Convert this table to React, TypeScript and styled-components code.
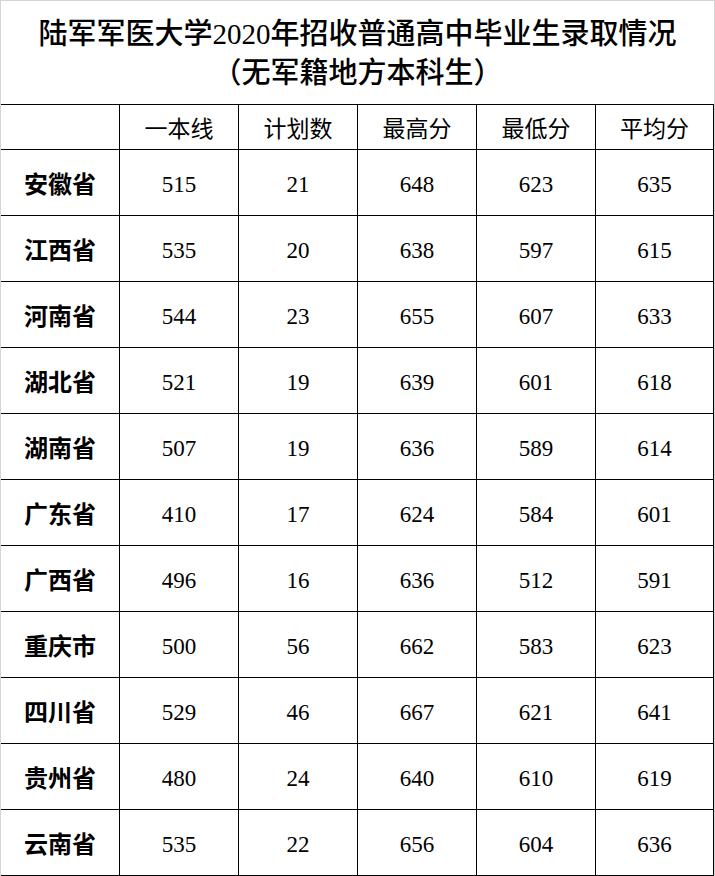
import React from 'react';
import styled, { createGlobalStyle } from 'styled-components';

const GlobalStyle = createGlobalStyle`
  html, body {
    margin: 0;
    padding: 0;
    background: #fff;
  }
`;

const Page = styled.div`
  width: 715px;
  height: 876px;
  box-sizing: border-box;
  border-left: 1px solid #d4d4d4;
  border-right: 1px solid #d4d4d4;
  border-top: 1px solid #d4d4d4;
  background: #fff;
  color: #000;
`;

const TitleBox = styled.div`
  height: 103px;
  display: flex;
  flex-direction: column;
  align-items: center;
  justify-content: center;
  padding-top: 2px;
  box-sizing: border-box;
  font-family: "Liberation Serif", "Noto Sans CJK SC", serif;
  font-size: 29px;
  font-weight: 500;
  line-height: 36px;
`;

const TitleLine = styled.div`
  white-space: nowrap;
`;

// fullwidth brackets centred in their em box, as in the source
const Bracket = styled.span`
  font-family: "Noto Sans CJK TC", "Noto Sans CJK SC", sans-serif;
`;

const Table = styled.div`
  display: grid;
  grid-template-columns: 119px 119px 119px 119px 119px 118px;
  grid-template-rows: 45px repeat(11, 66px);
  border-top: 1px solid #000;
`;

type Kind = 'head' | 'name' | 'num';

const Cell = styled.div<{ $kind: Kind }>`
  box-sizing: border-box;
  display: flex;
  align-items: center;
  justify-content: center;
  border-right: 1px solid #000;
  border-bottom: 1px solid #000;
  white-space: nowrap;
  font-family: ${(p) =>
    p.$kind === 'name'
      ? '"Noto Sans CJK SC", sans-serif'
      : '"Liberation Serif", "Noto Sans CJK SC", serif'};
  font-weight: ${(p) => (p.$kind === 'name' ? 700 : 400)};
  font-size: ${(p) => (p.$kind === 'name' ? '24px' : '23px')};
  padding-top: ${(p) => (p.$kind === 'num' ? '4px' : '0')};
`;

const headers = ['', '一本线', '计划数', '最高分', '最低分', '平均分'];

const rows: [string, number, number, number, number, number][] = [
  ['安徽省', 515, 21, 648, 623, 635],
  ['江西省', 535, 20, 638, 597, 615],
  ['河南省', 544, 23, 655, 607, 633],
  ['湖北省', 521, 19, 639, 601, 618],
  ['湖南省', 507, 19, 636, 589, 614],
  ['广东省', 410, 17, 624, 584, 601],
  ['广西省', 496, 16, 636, 512, 591],
  ['重庆市', 500, 56, 662, 583, 623],
  ['四川省', 529, 46, 667, 621, 641],
  ['贵州省', 480, 24, 640, 610, 619],
  ['云南省', 535, 22, 656, 604, 636],
];

const App = () => (
  <>
    <GlobalStyle />
    <Page>
      <TitleBox>
        <TitleLine>陆军军医大学2020年招收普通高中毕业生录取情况</TitleLine>
        <TitleLine>
          <Bracket>（</Bracket>无军籍地方本科生<Bracket>）</Bracket>
        </TitleLine>
      </TitleBox>
      <Table>
        {headers.map((h, i) => (
          <Cell key={`h${i}`} $kind="head">
            {h}
          </Cell>
        ))}
        {rows.map((r) =>
          r.map((v, i) => (
            <Cell key={`${r[0]}-${i}`} $kind={i === 0 ? 'name' : 'num'}>
              {v}
            </Cell>
          ))
        )}
      </Table>
    </Page>
  </>
);

export default App;
